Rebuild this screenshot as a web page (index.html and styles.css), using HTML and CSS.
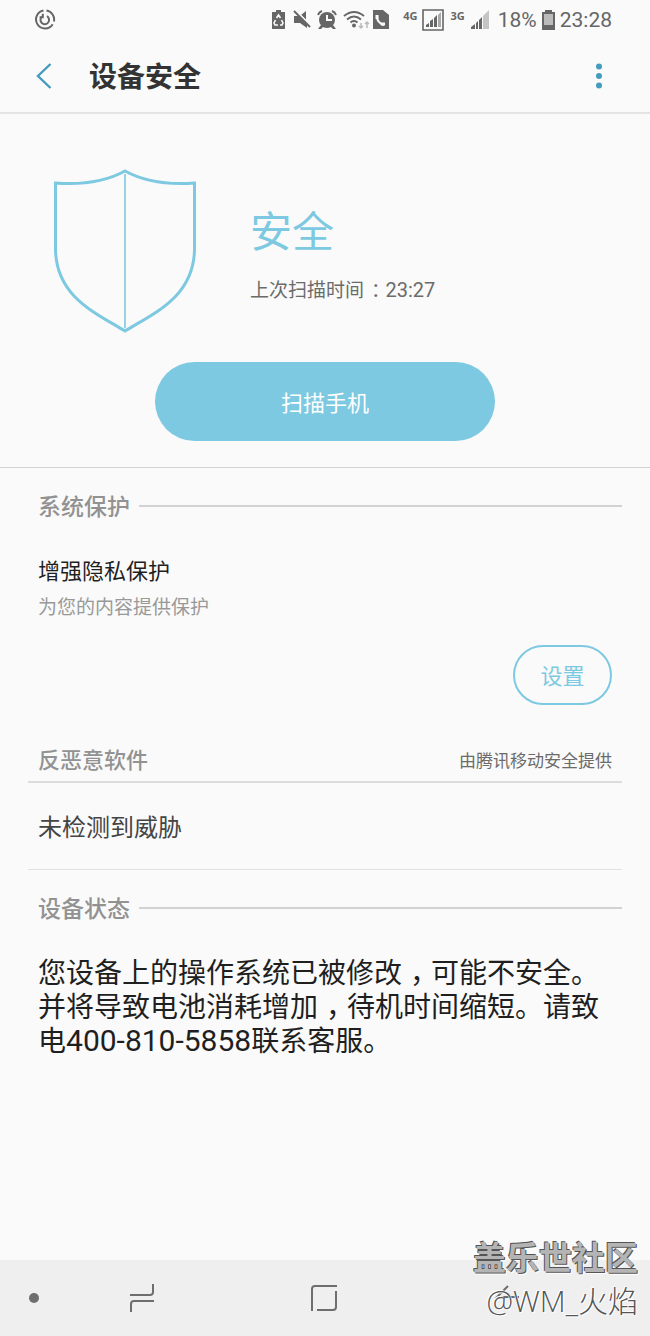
FILE: index.html
```html
<!DOCTYPE html>
<html lang="zh-CN">
<head>
<meta charset="utf-8">
<meta name="viewport" content="width=device-width, initial-scale=1">
<title>设备安全</title>
<link rel="stylesheet" href="styles.css">
</head>
<body>
<div class="screen">
  <div class="status-bar">
    <svg class="status-app" width="22" height="22" viewBox="0 0 22 22" fill="none" stroke="#666" stroke-width="2">
      <path d="M12.500 1.600A9 9 0 0 1 19.900 12.500M18.700 15.200A9 9 0 1 1 9.500 1.600"/>
      <path d="M8 7.600A4.300 4.300 0 1 0 13 7.200M8.800 4.800V8.300H5.600"/>
    </svg>
    <div class="status-icons">
      <svg class="alerts" width="124" height="24" viewBox="0 0 124 24">
        <g fill="#666">
          <path d="M1 4h4V2h5v2h4v17H1z"/>
          <path d="M23 8h5l8 8v4l-7-5h-6zM30 7l5-4v9z"/>
          <circle cx="56" cy="12" r="8"/>
          <path d="M50 17l-3 4h3l3-3zM62 17l3 4h-3l-3-3z"/>
          <circle cx="83" cy="17.500" r="2"/>
          <path d="M102 2h10l6 5v14h-16z"/>
        </g>
        <path d="M25 3l16 16" fill="none" stroke="#fafafa" stroke-width="2"/>
        <g fill="none" stroke="#666" stroke-width="2">
          <path d="M23 3l16 16"/>
          <path d="M47 7q1-3 4-4M65 7q-1-3-4-4"/>
          <path d="M73 8q10-8 20 0M76 11.500q7-6 14 0M79.500 14.500q3.500-3 7 0"/>
        </g>
        <g fill="none" stroke="#fafafa">
          <path d="M5.500 10l2-3 2 3M4.500 12l-1.500 3 1 2h3M10.500 12l1.500 3-1 2H9" stroke-width="1.600"/>
          <path d="M56 7v5h5" stroke-width="2"/>
          <path d="M106 8q0 7 7 9" stroke-width="2"/>
          <path d="M106 7v4M110 16h4" stroke-width="3"/>
        </g>
        <path d="M90 15v5M88 18l2 2 2-2M96 20v-6M94 16l2-2 2 2" fill="none" stroke="#bbb" stroke-width="1.500"/>
      </svg>
      <span class="network">4G</span>
      <svg width="23" height="24" viewBox="0 0 23 24">
        <path d="M1 2h20v20H1z" fill="none" stroke="#666" stroke-width="1.600"/>
        <path d="M4 19v-2l3-2v4zM8 19v-6l3-2v8zM12 19v-9l3-3v12z" fill="#666"/>
        <path d="M16 19V7l3-3v15z" fill="#aaa"/>
      </svg>
      <span class="network">3G</span>
      <svg class="signal" width="20" height="24" viewBox="0 0 20 24">
        <path d="M1 21v-2l4-3v5zM6 21v-6l2-2v8zM9 21v-9l3-3v12z" fill="#666"/>
        <path d="M13 21V8l6-6v19z" fill="#c4c4c4"/>
      </svg>
      <span class="reading">18%</span>
      <svg class="battery" width="13" height="20" viewBox="0 0 13 20">
        <path d="M0 2h3V0h7v2h3v18H0z" fill="#666"/>
        <path d="M2 4h9v11H2z" fill="#bbb"/>
      </svg>
      <span class="reading">23:28</span>
    </div>
  </div>

  <header class="title-bar">
    <button class="icon-button" type="button" aria-label="返回">
      <svg width="16" height="26" viewBox="0 0 16 26" fill="none" stroke="#439bbd" stroke-width="2.400"><path d="M14.500 1L2 13l12.500 12"/></svg>
    </button>
    <h1 class="title">设备安全</h1>
    <button class="icon-button" type="button" aria-label="更多选项">
      <svg width="6" height="26" viewBox="0 0 6 26" fill="#439bbd"><circle cx="3" cy="3.500" r="3"/><circle cx="3" cy="13" r="3"/><circle cx="3" cy="22.500" r="3"/></svg>
    </button>
  </header>

  <main class="content">
    <section class="hero">
      <div class="summary">
        <svg class="shield" width="144" height="166" viewBox="0 0 144 166" fill="none" stroke="#7cc9e1">
          <path d="M72 3C52 14 29 17 2.500 15V81C3 129 43 145 72 163C101 145 141 129 141.500 81V15C115 17 92 14 72 3Z" stroke-width="3"/>
          <path d="M72 6v154" stroke-width="1.600"/>
        </svg>
        <div>
          <p class="state">安全</p>
          <p class="last-scan">上次扫描时间<span class="colon">：</span><span class="time">23:27</span></p>
        </div>
      </div>
      <button class="scan-button" type="button">扫描手机</button>
    </section>

    <section class="group">
      <h2 class="group-title ruled">系统保护</h2>
      <div class="privacy">
        <h3 class="item-title">增强隐私保护</h3>
        <p class="item-note">为您的内容提供保护</p>
        <button class="settings-button" type="button">设置</button>
      </div>
    </section>

    <section class="group">
      <div class="malware-head">
        <h2 class="group-title small">反恶意软件</h2>
        <span class="provider">由腾讯移动安全提供</span>
      </div>
      <p class="result">未检测到威胁</p>
    </section>

    <section class="group">
      <h2 class="group-title ruled">设备状态</h2>
      <p class="warning">您设备上的操作系统已被修改<span class="comma">，</span>可能不安全。并将导致电池消耗增加<span class="comma">，</span>待机时间缩短。请致电<span class="phone">400-810-5858</span>联系客服。</p>
    </section>
  </main>

  <nav class="nav-bar">
    <button class="nav-button dot-button" type="button" aria-label="显示或隐藏导航栏">
      <svg width="10" height="10" viewBox="0 0 10 10"><circle cx="5" cy="5" r="5" fill="#6e6e6e"/></svg>
    </button>
    <button class="nav-button" type="button" aria-label="最近">
      <svg width="26" height="28" viewBox="0 0 26 28" fill="none" stroke="#6e6e6e" stroke-width="2"><path d="M1 11h20q3 0 3-3V0M25 17H5q-3 0-3 3v8"/></svg>
    </button>
    <button class="nav-button" type="button" aria-label="主屏幕">
      <svg width="28" height="28" viewBox="0 0 28 28" fill="none" stroke="#6e6e6e" stroke-width="2"><path d="M2 27V5q0-3 3-3h22M26 7v16q0 3-3 3H7"/></svg>
    </button>
    <button class="nav-button" type="button" aria-label="返回">
      <svg width="26" height="28" viewBox="0 0 26 28" fill="none" stroke="#6e6e6e" stroke-width="2"><path d="M14 2L3 13h22"/></svg>
    </button>
    <div class="watermark">
      <span class="community">盖乐世社区</span>
      <span class="author">@WM_火焰</span>
    </div>
  </nav>
</div>
</body>
</html>
```
FILE: styles.css
```css
* {
  box-sizing: border-box;
}

body,
h1,
h2,
h3,
p {
  margin: 0;
}

body {
  background: #fafafa;
  color: #1f1f1f;
  font-family: Roboto, "Noto Sans CJK SC", sans-serif;
}

button {
  padding: 0;
  border: 0;
  background: none;
  font: inherit;
}

svg {
  display: block;
  flex: none;
}

.screen {
  display: flex;
  flex-direction: column;
  min-height: 100vh;
}

.status-bar {
  display: flex;
  justify-content: space-between;
  align-items: center;
  height: 40px;
  padding: 0 38px 0 34px;
  color: #666;
}

.status-icons {
  display: flex;
  align-items: center;
  gap: 5px;
}

.alerts {
  margin-right: 3px;
}

.signal {
  margin-right: 3px;
}

.network {
  padding-bottom: 8px;
  font: bold 11px/12px "Noto Sans", sans-serif;
}

.reading {
  font-size: 21px;
  line-height: 24px;
}

.title-bar {
  display: flex;
  align-items: center;
  height: 74px;
  padding: 0 38px 0 22px;
  border-bottom: 2px solid #e4e4e4;
}

.icon-button {
  display: grid;
  place-items: center;
  min-width: 26px;
  height: 48px;
}

.icon-button:first-child {
  width: 44px;
}

.title {
  flex: 1;
  padding: 4px 0 0 23px;
  color: #333;
  font-size: 28px;
  line-height: 40px;
  font-weight: 700;
}

.content {
  flex: 1;
}

.hero {
  padding: 54px 28px 26px;
  border-bottom: 1px solid #d2d2d2;
}

.summary {
  display: flex;
  align-items: center;
  gap: 53px;
  padding-left: 25px;
}

.state {
  padding-top: 6px;
  color: #7cc9e1;
  font-size: 42px;
  line-height: 60px;
}

.last-scan {
  padding-top: 14px;
  color: #6b6b6b;
  font-size: 19px;
  line-height: 28px;
}

.time {
  font-size: 20px;
  line-height: 20px;
}

.colon,
.comma {
  font-feature-settings: "halt";
}

.colon {
  padding: 0 5px 0 7px;
}

.comma {
  padding: 0 7px 0 8px;
}

.scan-button {
  display: block;
  width: 340px;
  max-width: 100%;
  height: 79px;
  margin: 28px auto 0;
  padding-bottom: 1px;
  border-radius: 40px;
  background: #7cc9e1;
  color: #fff;
  font-size: 22px;
}

.group {
  padding: 0 28px;
}

.group-title {
  color: #929292;
  font-size: 23px;
  line-height: 34px;
  font-weight: 500;
}

.ruled {
  display: flex;
  align-items: center;
  gap: 9px;
  padding: 23px 0 0 10px;
}

.ruled::after {
  content: "";
  flex: 1;
  height: 2px;
  margin-bottom: 4px;
  background: #d2d2d2;
}

.small {
  font-size: 22px;
}

.privacy {
  display: flex;
  flex-direction: column;
  padding: 31px 10px 36px;
}

.item-title {
  font-size: 22px;
  line-height: 32px;
  font-weight: 400;
}

.item-note {
  padding-top: 6px;
  color: #999;
  font-size: 19px;
  line-height: 28px;
}

.settings-button {
  align-self: flex-end;
  width: 99px;
  height: 60px;
  margin-top: 23px;
  padding-bottom: 2px;
  border: 2px solid #7cc9e1;
  border-radius: 30px;
  color: #7cc9e1;
  font-size: 22px;
}

.malware-head {
  display: flex;
  justify-content: space-between;
  align-items: center;
  padding: 3px 10px 3px;
  border-bottom: 2px solid #dcdcdc;
}

.provider {
  color: #6b6b6b;
  font-size: 17px;
  line-height: 24px;
}

.result {
  padding: 27px 10px 23px;
  border-bottom: 1px solid #e2e2e2;
  color: #444;
  font-size: 24px;
  line-height: 36px;
}

.warning {
  padding: 30px 10px;
  font-size: 28px;
  line-height: 34px;
}

.phone {
  font-size: 30px;
  line-height: 30px;
}

.nav-bar {
  position: relative;
  display: grid;
  grid-template-columns: 51px repeat(3, 1fr);
  align-items: center;
  height: 76px;
  padding-right: 52px;
  background: #efefef;
}

.nav-button {
  display: grid;
  place-items: center;
  height: 48px;
}

.dot-button {
  padding-left: 16px;
}

.watermark {
  position: absolute;
  right: 12px;
  bottom: 15px;
  display: flex;
  flex-direction: column;
  align-items: flex-end;
  white-space: nowrap;
  pointer-events: none;
}

.community {
  color: #b4b4b4;
  font-size: 33px;
  line-height: 44px;
  font-weight: 700;
  text-shadow: -1px -1px #555, 1px 1px #555, 2px 2px #fff;
}

.author {
  color: #555;
  font: 300 30px/40px "Open Sans", "Noto Sans CJK SC", sans-serif;
  text-shadow: -1px -1px #fff, 1px 1px #fff;
}
```
